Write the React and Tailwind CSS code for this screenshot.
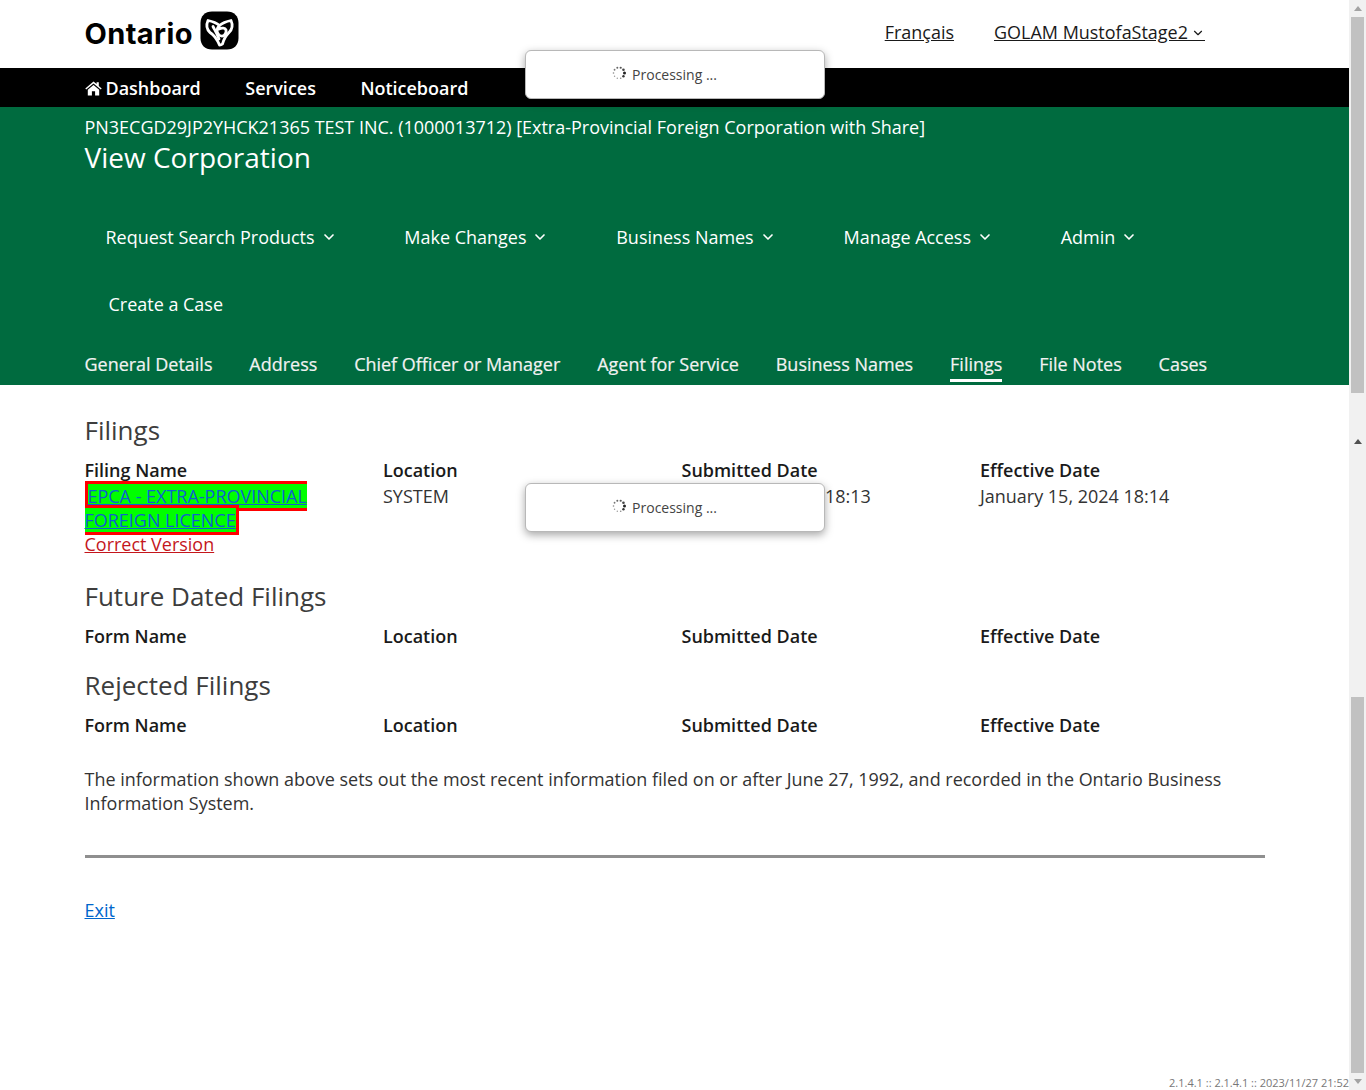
import React from 'react';
import { ChevronDown } from 'lucide-react';

function Trillium() {
  return (
    <svg width="39" height="39" viewBox="0 0 39 39" className="block">
      <path d="M12 0.500H27C34 0.500 38.500 5 38.500 12V27C38.500 34 34 38.500 27 38.500H12C5 38.500 0.500 34 0.500 27V12C0.500 5 5 0.500 12 0.500Z" fill="#000" />
      <g fill="none" stroke="#fff" strokeWidth="2.800" strokeLinejoin="round" strokeLinecap="round">
        <path d="M8 9.500C13 10.500 16 11.500 19.500 14.500C23 11.500 26 10.500 31 9.500C33 14 32.500 18 29 21.500C26.500 24 24 27 22.500 33C21.500 33.800 20.500 34 19.500 34C17 28 15 24.500 10 21.500C6.500 18 6 14 8 9.500Z" />
        <path d="M19.500 14.500C16.500 17 16 21 19 24C23 27 27 23 26 19C25 17 22 16.500 19 18" />
        <path d="M13 15.500C15 19.500 17 22 19 28" />
      </g>
    </svg>
  );
}

function Spinner() {
  const dots = [
    [0, 1.500, '#222'], [36, 1.200, '#333'], [72, 0.800, '#888'], [108, 0.700, '#999'], [144, 0.700, '#999'],
    [180, 0.800, '#888'], [216, 0.900, '#777'], [252, 1.000, '#666'], [288, 1.100, '#555'], [324, 1.300, '#444'],
  ];
  return (
    <svg width="14" height="14" viewBox="0 0 14 14" className="block -mt-[3px]">
      {dots.map(([a, r, c]) => (
        <circle
          key={a}
          cx={7 + 5.500 * Math.cos((a * Math.PI) / 180)}
          cy={7 + 5.500 * Math.sin((a * Math.PI) / 180)}
          r={r}
          fill={c}
        />
      ))}
    </svg>
  );
}

function Processing({ className }) {
  return (
    <div className={`absolute left-[525px] w-[300px] h-[49px] pr-[21px] bg-white rounded-[6px] border border-[#b8b8b8] shadow-[0_3px_8px_rgba(0,0,0,0.35)] flex items-center justify-center gap-[6px] text-[14px] text-[#444] ${className}`}>
      <Spinner />
      <span>Processing ...</span>
    </div>
  );
}

function MenuItem({ label, className }) {
  return (
    <div className={`flex items-center gap-[6px] ${className}`}>
      <span>{label}</span>
      <ChevronDown size={16} strokeWidth={2.500} />
    </div>
  );
}

function Row({ labels }) {
  return (
    <div className="grid grid-cols-4 gap-0 w-[1194px] font-semibold text-[#1a1a1a] leading-[24px]">
      {labels.map((l) => <div key={l}>{l}</div>)}
    </div>
  );
}

function Scrollbar() {
  return (
    <aside className="w-[17px] shrink-0 h-[1090px] bg-[#f1f1f1] flex flex-col items-center">
      <div className="h-[17px] flex items-center justify-center">
        <div className="w-0 h-0 border-l-[4px] border-r-[4px] border-b-[5px] border-l-transparent border-r-transparent border-b-[#a3a3a3]" />
      </div>
      <div className="w-[13px] h-[376px] bg-[#c1c1c1]" />
      <div className="h-[40px]" />
      <div className="h-[17px] flex items-center justify-center">
        <div className="w-0 h-0 border-l-[4px] border-r-[4px] border-b-[5px] border-l-transparent border-r-transparent border-b-[#505050]" />
      </div>
      <div className="h-[247px]" />
      <div className="w-[13px] h-[376px] bg-[#c1c1c1]" />
      <div className="h-[17px] flex items-center justify-center">
        <div className="w-0 h-0 border-l-[4px] border-r-[4px] border-t-[5px] border-l-transparent border-r-transparent border-t-[#a3a3a3]" />
      </div>
    </aside>
  );
}

const tabs = ['General Details', 'Address', 'Chief Officer or Manager', 'Agent for Service', 'Business Names', 'Filings', 'File Notes', 'Cases'];

export default function App() {
  return (
    <div className="relative flex w-[1366px] h-[1090px] overflow-hidden bg-white text-[17.985px] text-[#1a1a1a] font-['Open_Sans',sans-serif]">
      <div className="flex-1 min-w-0 flex flex-col">
        <header className="h-[68px] pl-[84.500px] pr-[144px] flex items-center justify-between">
          <div className="flex items-center gap-[7px] -mt-[7px]">
            <span className="font-['Inter',sans-serif] font-bold text-[29px] leading-none text-black tracking-[0.400px] mt-[5px]">Ontario</span>
            <Trillium />
          </div>
          <div className="flex items-center gap-[40px] -mt-[4px] text-[#1a1a1a]">
            <a className="underline" href="#">Français</a>
            <a className="underline relative" href="#">
              GOLAM MustofaStage2<span className="tracking-[1px]">{'\u00a0\u00a0\u00a0'}</span>
              <ChevronDown size={14} strokeWidth={2} className="absolute right-0 top-[7px]" />
            </a>
          </div>
        </header>

        <nav className="h-[39px] bg-black text-white font-semibold pl-[84.500px] flex items-center gap-[44.500px] pt-[2px]">
          <div className="flex items-center gap-[4px]">
            <svg width="17" height="15" viewBox="0 0 17 15" className="block">
              <path d="M8.500 0.500L0.300 7.500L1.200 8.500L8.500 2.400L15.800 8.500L16.700 7.500L13.800 5V1.200H11.600V3.100L8.500 0.500ZM2.800 8.700V14.500H6.900V10.300H10.100V14.500H14.200V8.700L8.500 4Z" fill="#fff" />
            </svg>
            <span>Dashboard</span>
          </div>
          <span>Services</span>
          <span>Noticeboard</span>
        </nav>

        <section className="h-[278px] bg-[#006b3f] text-white flex flex-col pl-[84.500px]">
          <div className="pt-[8px] leading-[24px]">PN3ECGD29JP2YHCK21365 TEST INC. (1000013712) [Extra-Provincial Foreign Corporation with Share]</div>
          <h1 className="text-[28px] leading-[38px] -mt-[1px]">View Corporation</h1>
          <div className="flex items-center h-[34px] mt-[44px] pl-[21px]">
            <MenuItem label="Request Search Products" className="mr-[67.800px]" />
            <MenuItem label="Make Changes" className="mr-[67.800px]" />
            <MenuItem label="Business Names" className="mr-[67.800px]" />
            <MenuItem label="Manage Access" className="mr-[67.800px]" />
            <MenuItem label="Admin" />
          </div>
          <div className="h-[34px] mt-[33px] pl-[24px] flex items-center">Create a Case</div>
          <div className="flex mt-[28px] gap-[36.900px] h-[34px] text-[#f2f2f2] [-webkit-text-stroke:0.2px_#f2f2f2]">
            {tabs.map((t) => (
              <span key={t} className={t === 'Filings' ? 'leading-[30px] h-[30px] box-content border-b-[3px] border-white' : 'leading-[30px]'}>{t}</span>
            ))}
          </div>
        </section>

        <main className="pl-[84.500px] pr-[84px] flex-1 flex flex-col relative">
          <h2 className="text-[26px] leading-[34px] text-[#3d3d3d] mt-[28px]">Filings</h2>
          <div className="mt-[11px]"><Row labels={['Filing Name', 'Location', 'Submitted Date', 'Effective Date']} /></div>
          <div className="grid grid-cols-4 w-[1194px] leading-[24px] mt-[2px]">
            <div>
              <div className="w-[270px]">
                <span className="bg-[#00ff00] border-[3px] border-[#ff0000]">
                  <a className="text-[#0f5fd0] underline" href="#">EPCA - EXTRA-PROVINCIAL FOREIGN LICENCE</a>
                </span>
              </div>
              <a className="block text-[#c4161c] underline" href="#">Correct Version</a>
            </div>
            <div className="text-[#333]">SYSTEM</div>
            <div className="text-[#333]">January 15, 2024 18:13</div>
            <div className="text-[#333]">January 15, 2024 18:14</div>
          </div>

          <h2 className="text-[26px] leading-[34px] text-[#3d3d3d] mt-[23px]">Future Dated Filings</h2>
          <div className="mt-[11px]"><Row labels={['Form Name', 'Location', 'Submitted Date', 'Effective Date']} /></div>

          <h2 className="text-[26px] leading-[34px] text-[#3d3d3d] mt-[20px]">Rejected Filings</h2>
          <div className="mt-[11px]"><Row labels={['Form Name', 'Location', 'Submitted Date', 'Effective Date']} /></div>

          <p className="mt-[30px] leading-[24px] text-[#333]">The information shown above sets out the most recent information filed on or after June 27, 1992, and recorded in the Ontario Business Information System.</p>

          <hr className="mt-[40px] ml-[0.500px] border-0 h-[3px] bg-[#8f8f8f] w-[1180px]" />

          <a className="mt-[40px] self-start text-[#0066cc] underline leading-[24px]" href="#">Exit</a>

          <div className="absolute right-0 bottom-0 text-[11px] leading-[14px] text-[#777] whitespace-nowrap">2.1.4.1 :: 2.1.4.1 :: 2023/11/27 21:52</div>
        </main>
      </div>
      <Scrollbar />
      <Processing className="top-[50px]" />
      <Processing className="top-[483px]" />
    </div>
  );
}
